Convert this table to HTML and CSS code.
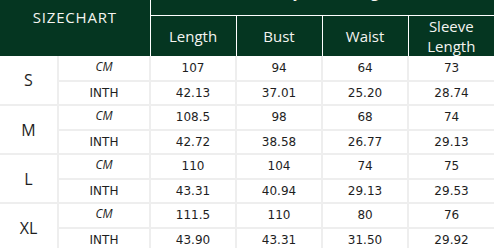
FILE: index.html
```html
<!DOCTYPE html>
<html>
<head>
<meta charset="utf-8">
<link rel="stylesheet" href="styles.css">
</head>
<body>
<table class="chart">
  <colgroup>
    <col class="c-size"><col class="c-unit"><col class="c-val"><col class="c-val"><col class="c-val"><col class="c-val">
  </colgroup>
  <thead>
    <tr class="h-top">
      <th class="h-title" colspan="2" rowspan="2">SIZECHART</th>
      <th class="h-group" colspan="4">Body Measuring</th>
    </tr>
    <tr class="h-sub">
      <th>Length</th><th>Bust</th><th>Waist</th><th class="h-two">Sleeve<br>Length</th>
    </tr>
  </thead>
  <tbody>
    <tr><td class="size" rowspan="2">S</td><td class="unit cm">CM</td><td>107</td><td>94</td><td>64</td><td>73</td></tr>
    <tr><td class="unit">INTH</td><td>42.13</td><td>37.01</td><td>25.20</td><td>28.74</td></tr>
    <tr><td class="size" rowspan="2">M</td><td class="unit cm">CM</td><td>108.5</td><td>98</td><td>68</td><td>74</td></tr>
    <tr><td class="unit">INTH</td><td>42.72</td><td>38.58</td><td>26.77</td><td>29.13</td></tr>
    <tr><td class="size" rowspan="2">L</td><td class="unit cm">CM</td><td>110</td><td>104</td><td>74</td><td>75</td></tr>
    <tr><td class="unit">INTH</td><td>43.31</td><td>40.94</td><td>29.13</td><td>29.53</td></tr>
    <tr><td class="size" rowspan="2">XL</td><td class="unit cm">CM</td><td>111.5</td><td>110</td><td>80</td><td>76</td></tr>
    <tr><td class="unit">INTH</td><td>43.90</td><td>43.31</td><td>31.50</td><td>29.92</td></tr>
  </tbody>
</table>
</body>
</html>
```
FILE: styles.css
```css
html, body {
  margin: 0;
  padding: 0;
  background: #ffffff;
  overflow: hidden;
}
.chart {
  margin-top: -22px;
  width: 494px;
  table-layout: fixed;
  border-collapse: collapse;
  font-family: "DejaVu Sans", Verdana, sans-serif;
}
.c-size { width: 58px; }
.c-unit { width: 92px; }
.c-val { width: 86px; }

.chart th {
  background: #053621;
  color: #f4f4f0;
  font-family: "Comic Sans MS", "Open Sans", sans-serif;
  font-weight: normal;
  font-size: 15px;
  line-height: 18px;
  border: 1px solid #ffffff;
  padding: 0;
  text-align: center;
  vertical-align: middle;
}
.chart thead tr:first-child th { border-top: none; }
.chart th.h-title { border-left: none; letter-spacing: 0.8px; }
.chart th.h-group { padding-bottom: 10px; }
.chart th.h-two { line-height: 20px; }
.chart thead tr th:last-child { border-right: none; }
.h-top { height: 37px; }
.h-sub { height: 40px; }

.chart tbody tr { height: 24.5px; }
.chart td {
  border: 2px solid #eeeeee;
  padding: 0;
  text-align: center;
  vertical-align: middle;
  font-size: 12px;
  line-height: 14px;
  color: #1e1e1e;
}
.chart tbody tr:first-child td { border-top: none; }
.chart td:first-child { border-left: none; }
.chart td:last-child { border-right: none; }
.chart td.size {
  font-family: "Comic Sans MS", "Open Sans", sans-serif;
  font-size: 16px;
}
.chart td.cm {
  font-family: "Comic Sans MS", "Open Sans", sans-serif;
  font-style: italic;
  padding-bottom: 3px;
}
```
